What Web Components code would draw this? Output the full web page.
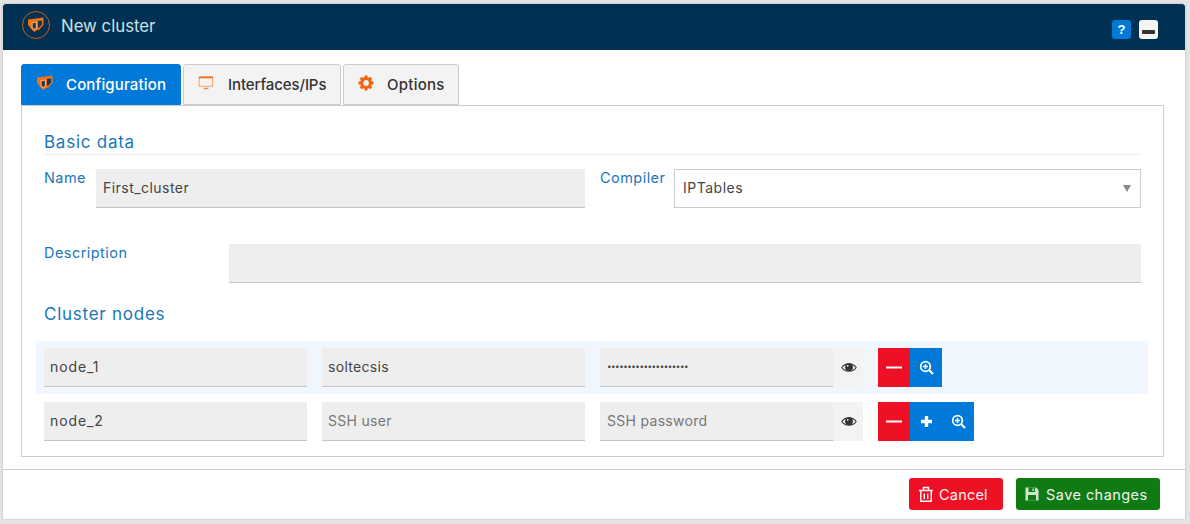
<!DOCTYPE html>
<html>
<head>
<meta charset="utf-8">
<style>
    html, body { margin: 0; height: 100%; }
    body {
        background-color: #e4e4e4;
        font-family: Inter, "Liberation Sans", sans-serif;
        box-sizing: border-box;
        padding: 4px 5px 5px 3px;
        overflow: hidden;
    }
</style>
</head>
<body>
<cluster-dialog title-text="New cluster">
    <cluster-tabs></cluster-tabs>
    <cluster-section>
        <section-title>Basic data</section-title>
        <form-row slot="basic">
            <text-field label="Name" value="First_cluster" width="52"></text-field>
            <select-field label="Compiler" value="IPTables"></select-field>
        </form-row>
        <text-field slot="desc" label="Description" width="185"></text-field>
        <section-title slot="nodes-title" second>Cluster nodes</section-title>
        <node-row slot="nodes" active name="node_1" user="soltecsis" pass="••••••••••••••••••••"></node-row>
        <node-row slot="nodes" name="node_2" can-add></node-row>
    </cluster-section>
</cluster-dialog>

<script>
const SHIELDS = `<path d="M0 2.5 L15.5 .5 V8 L11 13 H9 L6.5 15 L4 13 L0 8Z" fill="#f36f10"/>
    <path d="M3.5 5 L9 4.4 V11 L6.5 13.6 L3.5 11Z" fill="#f9a866"/>
    <path d="M4.7 6.2 L7.8 5.8 V10.6 L6.4 12 L4.7 10.6Z" fill="#17394f"/>
    <path d="M10 4 L14 3.4 V7.6 L11.5 10.6 H10Z" fill="#17394f"/>`;

const ICONS = {
    shield: SHIELDS,
    monitor: `<path d="M1.2 2 H15.5 V11.5 H1.2Z" fill="none" stroke="#f7a468" stroke-width="1.2"/><path d="M1 2 H16" stroke="#ef7320" stroke-width="2"/><path d="M6 13 H11 V14.5 H6Z" fill="#f58a3c"/>`,
    gear: `<g stroke="#f0640a" fill="none"><circle cx="8" cy="8" r="4.4" stroke-width="3"/>
        <path stroke-width="3" d="M8 .5 V3 M8 13 V15.5 M.5 8 H3 M13 8 H15.5 M2.7 2.7 L4.5 4.5 M11.5 11.5 L13.3 13.3 M13.3 2.7 L11.5 4.5 M4.5 11.5 L2.7 13.3"/></g>`,
    trash: `<path d="M1 4.5 H15 M5.5 4 V1.5 H10.5 V4 M2.8 5 V15.3 H13.2 V5 M6.3 7.5 V13 M9.7 7.5 V13" fill="none" stroke="#fff" stroke-width="1.4"/>`,
    save: `<path d="M1.5 1.5 H12 L14.5 4 V14.5 H1.5Z" fill="#cfe3cf"/><path d="M4.5 1.5 H11 V6 H4.5Z M4 9 H12 V14.5 H4Z" fill="#107a14"/><path d="M8.5 2.5 H10 V5 H8.5Z" fill="#cfe3cf"/>`,
    eye: `<path d="M.8 6.5 C4 1.6 12 1.6 15.2 6.5 C12 11.4 4 11.4 .8 6.5Z" fill="#f3f3f3" stroke="#3a3a3a" stroke-width="1.1"/><circle cx="8" cy="6.2" r="3.9" fill="#333"/><circle cx="6.7" cy="4.8" r=".9" fill="#f3f3f3"/>`,
    zoom: `<circle cx="6.5" cy="6.5" r="4.8" fill="none" stroke="#fff" stroke-width="1.8"/><path d="M10 10 L14 14" stroke="#fff" stroke-width="2.2"/><path d="M4 6.5 H9 M6.5 4 V9" stroke="#fff" stroke-width="1.5"/>`,
    plus: `<path d="M7.5 2 V13 M2 7.5 H13" stroke="#fff" stroke-width="3.4"/>`,
    minus: `<path d="M0 1.5 H16" stroke="#fff" stroke-width="2"/>`
};

class ClusterDialog extends HTMLElement {
    constructor() {
        super();
        this.shadow = this.attachShadow({ mode: 'open' });
    }
    connectedCallback() {
        this.shadow.innerHTML = /*html*/`
            <style>
                * { box-sizing: border-box; }
                :host {
                    display: flex;
                    flex-direction: column;
                    height: 515px;
                    background-color: #fff;
                    box-shadow: 0 0 2px #bbb;
                }
                header {
                    height: 46px;
                    flex: none;
                    background-color: #003152;
                    display: flex;
                    align-items: center;
                    padding: 0 27px 0 18px;
                    color: #cde0ea;
                    font-size: 16.8px;
                    border-radius: 3px 3px 0 0;
                }
                .logo { width: 30px; height: 30px; margin-right: 10px; margin-top: -4px; }
                .title { flex-grow: 1; margin-top: -2px; }
                .hbtn {
                    width: 19px;
                    height: 19px;
                    border-radius: 3px;
                    margin-left: 8px;
                    margin-top: 4px;
                    display: flex;
                    align-items: center;
                    justify-content: center;
                    font: bold 13px "Liberation Sans", sans-serif;
                }
                .help { background-color: #0079d8; color: #fff; }
                .min { background-color: #f5f5f5; padding-top: 6px; }
                .min i { display: block; width: 13px; height: 4px; background-color: #333; border-radius: 1px; }
                main { flex-grow: 1; padding: 14px 21px 12px 18px; display: flex; flex-direction: column; }
                footer {
                    height: 50px;
                    flex: none;
                    border-top: 1px solid #ccc;
                    display: flex;
                    justify-content: flex-end;
                    align-items: flex-start;
                    padding: 8px 25px 0 0;
                    gap: 13px;
                }
            </style>
            <header>
                <svg class="logo" viewBox="0 0 30 30">
                    <circle cx="15" cy="15" r="13.5" fill="none" stroke="#c85f16" stroke-width="1"/>
                    <g transform="translate(7 7)">${ICONS.shield}</g>
                </svg>
                <span class="title">${this.getAttribute('title-text')}</span>
                <div class="hbtn help">?</div>
                <div class="hbtn min"><i></i></div>
            </header>
            <main><slot></slot></main>
            <footer>
                <action-button color="#ee1126" icon="trash" w="94" pad="9" gap="5">Cancel</action-button>
                <action-button color="#107a14" icon="save" w="144" pad="8" gap="6" ls=".45">Save changes</action-button>
            </footer>
        `;
    }
}
customElements.define('cluster-dialog', ClusterDialog);

class ActionButton extends HTMLElement {
    constructor() {
        super();
        this.shadow = this.attachShadow({ mode: 'open' });
    }
    connectedCallback() {
        this.shadow.innerHTML = /*html*/`
            <style>
                :host {
                    display: flex;
                    box-sizing: border-box;
                    align-items: center;
                    gap: ${this.getAttribute('gap')}px;
                    padding-left: ${this.getAttribute('pad')}px;
                    height: 32px;
                    width: ${this.getAttribute('w')}px;
                    background-color: ${this.getAttribute('color')};
                    color: #f2f2f2;
                    border-radius: 3px;
                    font-size: 14.5px;
                    letter-spacing: ${this.getAttribute('ls') || '.2'}px;
                }
                svg { width: 16px; height: 16px; flex: none; }
            </style>
            <svg viewBox="0 0 16 16">${ICONS[this.getAttribute('icon')]}</svg>
            <slot></slot>
        `;
    }
}
customElements.define('action-button', ActionButton);

class ClusterTabs extends HTMLElement {
    constructor() {
        super();
        this.shadow = this.attachShadow({ mode: 'open' });
    }
    connectedCallback() {
        this.shadow.innerHTML = /*html*/`
            <style>
                * { box-sizing: border-box; }
                :host { display: flex; gap: 2px; height: 41px; position: relative; }
                .tab {
                    height: 41px;
                    display: flex;
                    align-items: center;
                    font-size: 15px;
                    font-weight: 500;
                    color: #333;
                    background-color: #f3f3f3;
                    border: 1px solid #ccc;
                    border-radius: 3px 3px 0 0;
                }
                .tab.on { background-color: #0079d8; border-color: #0079d8; color: #fff; }
                svg { width: 16px; height: 16px; flex: none; margin-top: -4px; }
            </style>
            <div class="tab on" style="width:160px;padding-left:15px"><svg viewBox="0 0 16 16">${ICONS.shield}</svg><span style="margin-left:13px;letter-spacing:.15px">Configuration</span></div>
            <div class="tab" style="width:158px;padding-left:14px"><svg viewBox="0 0 17 16">${ICONS.monitor}</svg><span style="margin-left:14px;letter-spacing:-.1px">Interfaces/IPs</span></div>
            <div class="tab" style="width:116px;padding-left:14px"><svg viewBox="0 0 16 16">${ICONS.gear}</svg><span style="margin-left:13px;letter-spacing:.25px">Options</span></div>
        `;
    }
}
customElements.define('cluster-tabs', ClusterTabs);

class ClusterSection extends HTMLElement {
    constructor() {
        super();
        this.shadow = this.attachShadow({ mode: 'open' });
    }
    connectedCallback() {
        this.shadow.innerHTML = /*html*/`
            <style>
                * { box-sizing: border-box; }
                :host {
                    display: block;
                    box-sizing: border-box;
                    height: 352px;
                    border: 1px solid #ccc;
                    padding: 24px 22px 0;
                }
                .basic { display: block; margin-top: 14px; }
                .desc { display: block; margin-top: 36px; }
                .nodes { display: flex; flex-direction: column; gap: 1px; margin: 14px -7px 0 -8px; }
            </style>
            <slot></slot>
            <div class="basic"><slot name="basic"></slot></div>
            <div class="desc"><slot name="desc"></slot></div>
            <slot name="nodes-title"></slot>
            <div class="nodes"><slot name="nodes"></slot></div>
        `;
    }
}
customElements.define('cluster-section', ClusterSection);

class SectionTitle extends HTMLElement {
    constructor() {
        super();
        this.shadow = this.attachShadow({ mode: 'open' });
    }
    connectedCallback() {
        const second = this.hasAttribute('second');
        this.shadow.innerHTML = /*html*/`
            <style>
                :host {
                    display: block;
                    color: #1a76b8;
                    font-size: 17px;
                    letter-spacing: .75px;
                    line-height: 24px;
                    height: 25px;
                    ${second ? 'margin-top: 19px;' : 'box-sizing: content-box; border-bottom: 1px solid #eee; height: 24px;'}
                }
            </style>
            <slot></slot>
        `;
    }
}
customElements.define('section-title', SectionTitle);

class FormRow extends HTMLElement {
    constructor() {
        super();
        this.shadow = this.attachShadow({ mode: 'open' });
    }
    connectedCallback() {
        this.shadow.innerHTML = /*html*/`
            <style>
                :host { display: grid; grid-template-columns: 541px 541px; gap: 15px; }
            </style>
            <slot></slot>
        `;
    }
}
customElements.define('form-row', FormRow);

class TextField extends HTMLElement {
    constructor() {
        super();
        this.shadow = this.attachShadow({ mode: 'open' });
    }
    connectedCallback() {
        this.shadow.innerHTML = /*html*/`
            <style>
                * { box-sizing: border-box; }
                :host { display: flex; }
                label {
                    width: ${this.getAttribute('width')}px;
                    flex: none;
                    color: #1a76b8;
                    font-size: 14.5px;
                    letter-spacing: .45px;
                    line-height: 18px;
                }
                .input {
                    flex-grow: 1;
                    height: 39px;
                    padding: 0 7px 2px;
                    display: flex;
                    align-items: center;
                    background-color: #eee;
                    border-bottom: 1px solid #c4c4c4;
                    color: #444;
                    font-size: 14px;
                    letter-spacing: .46px;
                }
            </style>
            <label>${this.getAttribute('label')}</label>
            <div class="input">${this.getAttribute('value') || ''}</div>
        `;
    }
}
customElements.define('text-field', TextField);

class SelectField extends HTMLElement {
    constructor() {
        super();
        this.shadow = this.attachShadow({ mode: 'open' });
    }
    connectedCallback() {
        this.shadow.innerHTML = /*html*/`
            <style>
                * { box-sizing: border-box; }
                :host { display: flex; }
                label { width: 74px; flex: none; color: #1a76b8; font-size: 14.5px; letter-spacing: .45px; line-height: 18px; }
                .select {
                    flex-grow: 1;
                    height: 39px;
                    border: 1px solid #ccc;
                    padding: 0 9px 2px 8px;
                    display: flex;
                    align-items: center;
                    justify-content: space-between;
                    color: #444;
                    font-size: 14px;
                    letter-spacing: .5px;
                }
                i { width: 0; height: 0; border: 4px solid transparent; border-top: 7px solid #888; border-bottom: 0; margin-top: 2px; }
            </style>
            <label>${this.getAttribute('label')}</label>
            <div class="select">${this.getAttribute('value')}<i></i></div>
        `;
    }
}
customElements.define('select-field', SelectField);

class NodeRow extends HTMLElement {
    constructor() {
        super();
        this.shadow = this.attachShadow({ mode: 'open' });
    }
    connectedCallback() {
        const user = this.getAttribute('user');
        const pass = this.getAttribute('pass');
        const icon = (name, w, h) => `<svg width="${w}" height="${h}" viewBox="0 0 ${w} ${h}">${ICONS[name]}</svg>`;
        this.shadow.innerHTML = /*html*/`
            <style>
                * { box-sizing: border-box; }
                :host {
                    display: grid;
                    box-sizing: border-box;
                    grid-template-columns: 263px 263px 263px auto;
                    column-gap: 15px;
                    padding: 7px 8px;
                    height: 53px;
                    align-items: start;
                }
                :host([active]) { background-color: #eff6fe; }
                .input {
                    height: 39px;
                    padding: 0 6px 2px;
                    display: flex;
                    align-items: center;
                    background-color: #eee;
                    border-bottom: 1px solid #c4c4c4;
                    color: #444;
                    font-size: 14px;
                    letter-spacing: .3px;
                }
                .name { letter-spacing: .9px; }
                .ph { color: #777; }
                .dots { font-size: 8px; letter-spacing: -.45px; }
                .pass { display: flex; }
                .pass .input { flex-grow: 1; padding: 0 7px 2px; }
                .eye { width: 30px; height: 39px; flex: none; background-color: #f3f3f3; padding-left: 1px; display: flex; align-items: center; justify-content: center; }
                .btns { display: flex; }
                .btn { width: 32px; height: 39px; display: flex; align-items: center; justify-content: center; background-color: #0079d8; }
                .btn.red { background-color: #ee1126; }
            </style>
            <div class="input name">${this.getAttribute('name')}</div>
            <div class="input ${user ? '' : 'ph'}">${user || 'SSH user'}</div>
            <div class="pass">
                <div class="input ${pass ? 'dots' : 'ph'}">${pass || 'SSH password'}</div>
                <div class="eye">${icon('eye', 16, 13)}</div>
            </div>
            <div class="btns">
                <div class="btn red">${icon('minus', 16, 3)}</div>
                ${this.hasAttribute('can-add') ? `<div class="btn">${icon('plus', 15, 15)}</div>` : ''}
                <div class="btn">${icon('zoom', 15, 15)}</div>
            </div>
        `;
    }
}
customElements.define('node-row', NodeRow);
</script>
</body>
</html>
